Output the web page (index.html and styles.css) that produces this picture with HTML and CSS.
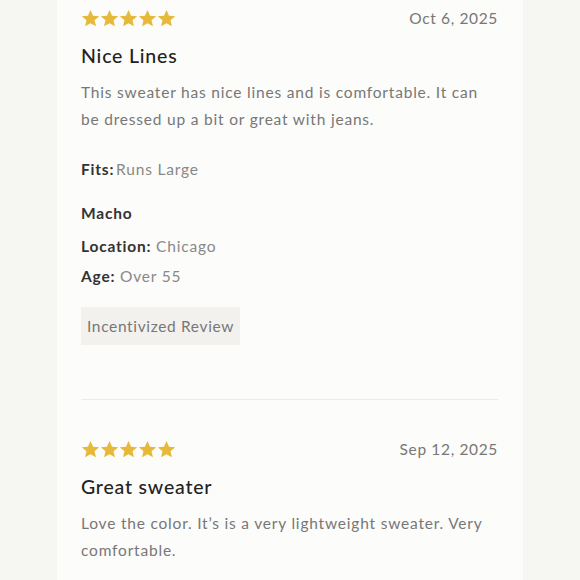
FILE: index.html
```html
<!DOCTYPE html>
<html>
<head>
<meta charset="utf-8">
<link rel="stylesheet" href="styles.css">
</head>
<body>
<div class="page">
  <div class="card">
    <div class="review">
      <div class="head">
        <div class="stars">
          <svg viewBox="0 0 24 24"><path d="M12 1.2l3.2 7.2 7.8.7-5.9 5.1 1.8 7.7L12 17.9l-6.9 4 1.8-7.7L1 9.1l7.8-.7z"/></svg>
          <svg viewBox="0 0 24 24"><path d="M12 1.2l3.2 7.2 7.8.7-5.9 5.1 1.8 7.7L12 17.9l-6.9 4 1.8-7.7L1 9.1l7.8-.7z"/></svg>
          <svg viewBox="0 0 24 24"><path d="M12 1.2l3.2 7.2 7.8.7-5.9 5.1 1.8 7.7L12 17.9l-6.9 4 1.8-7.7L1 9.1l7.8-.7z"/></svg>
          <svg viewBox="0 0 24 24"><path d="M12 1.2l3.2 7.2 7.8.7-5.9 5.1 1.8 7.7L12 17.9l-6.9 4 1.8-7.7L1 9.1l7.8-.7z"/></svg>
          <svg viewBox="0 0 24 24"><path d="M12 1.2l3.2 7.2 7.8.7-5.9 5.1 1.8 7.7L12 17.9l-6.9 4 1.8-7.7L1 9.1l7.8-.7z"/></svg>
        </div>
        <div class="date">Oct 6, 2025</div>
      </div>
      <h2 class="title">Nice Lines</h2>
      <p class="body">This sweater has nice lines and is comfortable. It can be dressed up a bit or great with jeans.</p>
      <div class="fits"><span class="label">Fits:</span> <span class="value">Runs Large</span></div>
      <div class="name">Macho</div>
      <div class="meta"><span class="label">Location:</span> <span class="value">Chicago</span></div>
      <div class="meta"><span class="label">Age:</span> <span class="value">Over 55</span></div>
      <div class="tag">Incentivized Review</div>
    </div>
    <div class="divider"></div>
    <div class="review second">
      <div class="head">
        <div class="stars">
          <svg viewBox="0 0 24 24"><path d="M12 1.2l3.2 7.2 7.8.7-5.9 5.1 1.8 7.7L12 17.9l-6.9 4 1.8-7.7L1 9.1l7.8-.7z"/></svg>
          <svg viewBox="0 0 24 24"><path d="M12 1.2l3.2 7.2 7.8.7-5.9 5.1 1.8 7.7L12 17.9l-6.9 4 1.8-7.7L1 9.1l7.8-.7z"/></svg>
          <svg viewBox="0 0 24 24"><path d="M12 1.2l3.2 7.2 7.8.7-5.9 5.1 1.8 7.7L12 17.9l-6.9 4 1.8-7.7L1 9.1l7.8-.7z"/></svg>
          <svg viewBox="0 0 24 24"><path d="M12 1.2l3.2 7.2 7.8.7-5.9 5.1 1.8 7.7L12 17.9l-6.9 4 1.8-7.7L1 9.1l7.8-.7z"/></svg>
          <svg viewBox="0 0 24 24"><path d="M12 1.2l3.2 7.2 7.8.7-5.9 5.1 1.8 7.7L12 17.9l-6.9 4 1.8-7.7L1 9.1l7.8-.7z"/></svg>
        </div>
        <div class="date">Sep 12, 2025</div>
      </div>
      <h2 class="title">Great sweater</h2>
      <p class="body">Love the color. It’s is a very lightweight sweater. Very comfortable.</p>
    </div>
  </div>
</div>
</body>
</html>
```
FILE: styles.css
```css
html, body {
  margin: 0;
  padding: 0;
  background: #f6f6f3;
  height: 580px;
  overflow: hidden;
}
.page {
  display: flex;
  height: 580px;
  padding-left: 57px;
  font-family: Lato, "Open Sans", sans-serif;
}
.card {
  width: 466px;
  background: #fcfcfa;
  padding: 8px 25px 0 24px;
  box-sizing: border-box;
}
.head {
  display: flex;
  justify-content: space-between;
  align-items: center;
  height: 20px;
}
.stars {
  display: flex;
  gap: 0;
}
.stars svg {
  width: 19px;
  height: 19px;
  fill: #e7b93a;
}
.date {
  font-size: 15.5px;
  color: #777;
  letter-spacing: 0.65px;
}
.title {
  margin: 15px 0 0;
  font-size: 19.5px;
  line-height: 26px;
  font-weight: 500;
  color: #222;
  letter-spacing: 0.8px;
}
.body {
  margin: 10px 0 0;
  font-size: 15.5px;
  line-height: 27px;
  color: #777;
  letter-spacing: 0.8px;
}
.fits, .name, .meta {
  font-size: 15.5px;
  line-height: 30px;
  letter-spacing: 0.8px;
}
.fits { margin-top: 21px; }
.name { margin-top: 14px; color: #333; font-weight: 700; }
.name + .meta { margin-top: 3px; }
.label { color: #333; font-weight: 700; }
.value { color: #888; }
.fits .label { margin-right: -3px; }
.tag {
  display: inline-block;
  margin-top: 16px;
  height: 38px;
  line-height: 38px;
  padding: 0 6px;
  background: #f3f1ee;
  color: #777;
  font-size: 15.5px;
  letter-spacing: 0.65px;
}
.divider {
  margin-top: 54px;
  height: 1px;
  background: #ecebe7;
}
.second {
  padding-top: 39px;
}
```
